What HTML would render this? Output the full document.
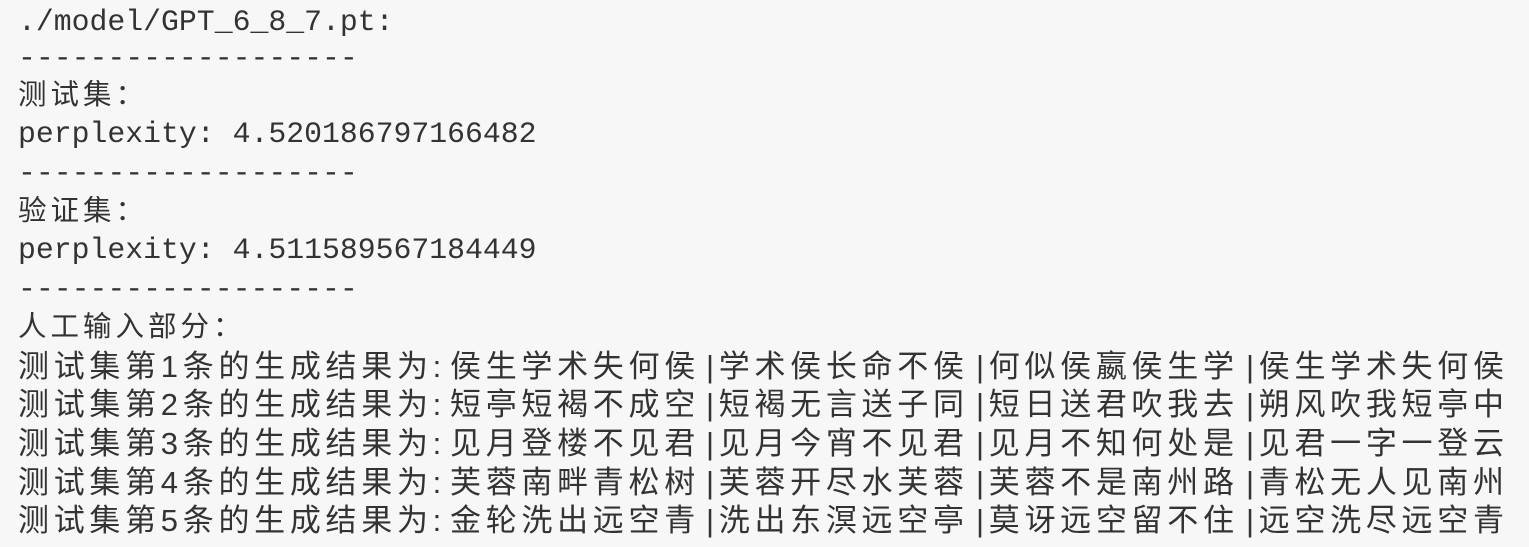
<!DOCTYPE html>
<html><head><meta charset="utf-8"><style>
html,body{margin:0;padding:0;background:#f7f7f7;}
body{width:1529px;height:547px;position:relative;overflow:hidden;color:#333;}
.l{position:absolute;left:18px;height:39px;line-height:39px;white-space:pre;font-family:"Liberation Mono","Noto Sans CJK SC",monospace;font-size:29.8px;}
.c{font-family:"Liberation Mono","Noto Sans CJK SC",monospace;font-size:28.5px;letter-spacing:4px;}
.p{position:absolute;height:39px;line-height:39px;white-space:pre;font-family:"Liberation Sans","Noto Sans CJK SC",sans-serif;font-size:31px;letter-spacing:4.7px;color:#333;}
</style></head><body>
<div class="l" style="top:3px">./model/GPT_6_8_7.pt:</div>
<div class="l" style="top:39px">-------------------</div>
<div class="l c" style="top:77px">测试集：</div>
<div class="l" style="top:115px">perplexity: 4.520186797166482</div>
<div class="l" style="top:154px">-------------------</div>
<div class="l c" style="top:193px">验证集：</div>
<div class="l" style="top:231px">perplexity: 4.511589567184449</div>
<div class="l" style="top:270px">-------------------</div>
<div class="l c" style="top:309px">人工输入部分：</div>

<div class="p" style="top:347px;left:18px">测试集第1条的生成结果为:</div>
<div class="p" style="top:347px;left:450px">侯生学术失何侯</div>
<div class="p" style="top:347px;left:706px">|学术侯长命不侯</div>
<div class="p" style="top:347px;left:976px">|何似侯嬴侯生学</div>
<div class="p" style="top:347px;left:1246px">|侯生学术失何侯</div>

<div class="p" style="top:385px;left:18px">测试集第2条的生成结果为:</div>
<div class="p" style="top:385px;left:450px">短亭短褐不成空</div>
<div class="p" style="top:385px;left:706px">|短褐无言送子同</div>
<div class="p" style="top:385px;left:976px">|短日送君吹我去</div>
<div class="p" style="top:385px;left:1246px">|朔风吹我短亭中</div>

<div class="p" style="top:424px;left:18px">测试集第3条的生成结果为:</div>
<div class="p" style="top:424px;left:450px">见月登楼不见君</div>
<div class="p" style="top:424px;left:706px">|见月今宵不见君</div>
<div class="p" style="top:424px;left:976px">|见月不知何处是</div>
<div class="p" style="top:424px;left:1246px">|见君一字一登云</div>

<div class="p" style="top:463px;left:18px">测试集第4条的生成结果为:</div>
<div class="p" style="top:463px;left:450px">芙蓉南畔青松树</div>
<div class="p" style="top:463px;left:706px">|芙蓉开尽水芙蓉</div>
<div class="p" style="top:463px;left:976px">|芙蓉不是南州路</div>
<div class="p" style="top:463px;left:1246px">|青松无人见南州</div>

<div class="p" style="top:501px;left:18px">测试集第5条的生成结果为:</div>
<div class="p" style="top:501px;left:450px">金轮洗出远空青</div>
<div class="p" style="top:501px;left:706px">|洗出东溟远空亭</div>
<div class="p" style="top:501px;left:976px">|莫讶远空留不住</div>
<div class="p" style="top:501px;left:1246px">|远空洗尽远空青</div>
</body></html>
